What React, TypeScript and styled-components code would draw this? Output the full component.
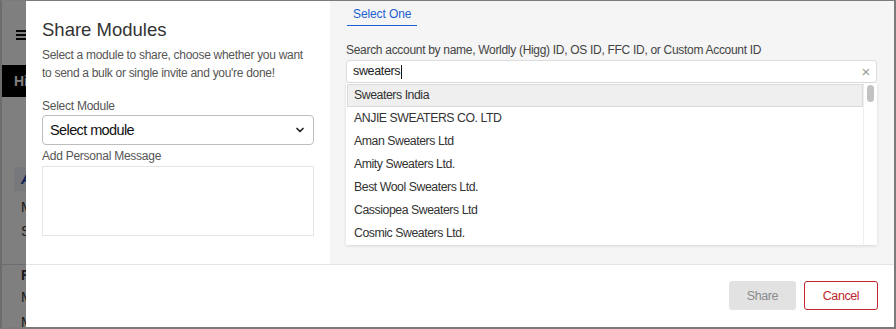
import React from 'react'
import styled, { createGlobalStyle } from 'styled-components'

const GlobalStyle = createGlobalStyle`
  html, body {
    margin: 0;
    padding: 0;
    background: #6f6f6f;
  }
  * { box-sizing: border-box; }
`

const Frame = styled.div`
  position: relative;
  width: 896px;
  height: 329px;
  overflow: hidden;
  border-top: 1px solid #7b7b7b;
  border-left: 2px solid #6c6c6c;
  border-right: 2px solid #7b7b7b;
  border-bottom: 2px solid #7b7b7b;
  background: #fff;
  font-family: "Liberation Sans", Arial, sans-serif;
`

const UnderPage = styled.div`
  display: flex;
  flex-direction: column;
  width: 100%;
  color: #222;
`

const Burger = styled.div`
  margin: 29px 0 0 14px;
  width: 12px;
  height: 10px;
  border-top: 2px solid #111;
  border-bottom: 2px solid #111;
  position: relative;
  &::after {
    content: '';
    position: absolute;
    left: 0;
    right: 0;
    top: 2px;
    height: 2px;
    background: #111;
  }
`

const BlackBar = styled.div`
  margin-top: 25px;
  height: 32px;
  background: #000;
  color: #fff;
  font-weight: bold;
  font-size: 14px;
  padding: 8px 0 0 12px;
`

const SideItem = styled.div<{ $active?: boolean; $bold?: boolean; $h?: number; $gap?: number }>`
  margin-top: ${p => p.$gap ?? 0}px;
  height: ${p => p.$h ?? 24}px;
  line-height: ${p => p.$h ?? 24}px;
  font-size: 14px;
  color: ${p => (p.$active ? '#0b3fa8' : '#333')};
  font-weight: ${p => (p.$active || p.$bold ? 'bold' : 'normal')};
  font-style: ${p => (p.$active ? 'italic' : 'normal')};
  background: ${p => (p.$active ? '#eef0f6' : 'transparent')};
  margin-left: ${p => (p.$active ? '12px' : '0')};
  padding-left: ${p => (p.$active ? '7px' : '19px')};
`

const SideRule = styled.div`
  margin-top: 21px;
  border-top: 1px solid #ddd;
`

const Overlay = styled.div`
  position: absolute;
  inset: 0;
  background: rgba(0, 0, 0, 0.5);
  display: flex;
  padding-left: 24px;
`

const Modal = styled.div`
  flex: 1;
  background: #fff;
  display: flex;
  flex-direction: column;
`

const Body = styled.div`
  display: flex;
  height: 264px;
  border-bottom: 1px solid #e6e6e6;
`

const LeftCol = styled.div`
  width: 304px;
  padding: 17px 16px 0 16px;
  display: flex;
  flex-direction: column;
`

const Title = styled.h2`
  margin: 0;
  font-size: 18.5px;
  font-weight: normal;
  color: #333;
  line-height: 24px;
`

const Description = styled.p`
  margin: 4px 0 0;
  font-size: 12px;
  line-height: 18px;
  letter-spacing: -0.3px;
  color: #555;
`

const FieldLabel = styled.label<{ $gap: number }>`
  display: block;
  margin-top: ${p => p.$gap}px;
  font-size: 12px;
  line-height: 16px;
  letter-spacing: -0.25px;
  color: #555;
`

const SelectBox = styled.div`
  margin-top: 1px;
  height: 30px;
  border: 1px solid #bdbdbd;
  border-radius: 4px;
  display: flex;
  align-items: center;
  justify-content: space-between;
  padding: 0 7px 0 7px;
  font-size: 14.5px;
  letter-spacing: -0.6px;
  color: #111;
`

const MessageBox = styled.div`
  margin-top: 2px;
  height: 70px;
  border: 1px solid #e6e6e6;
`

const RightCol = styled.div`
  flex: 1;
  background: #f5f5f5;
  padding: 0 16px 0 16px;
  display: flex;
  flex-direction: column;
`

const Tabs = styled.div`
  display: flex;
  padding-left: 1px;
`

const Tab = styled.div`
  padding: 6px 6px 4px 6px;
  font-size: 12px;
  line-height: 14px;
  letter-spacing: -0.1px;
  color: #1d5fd1;
  border-bottom: 1px solid #1d5fd1;
`

const SearchLabel = styled.div`
  margin-top: 17px;
  font-size: 12px;
  line-height: 14px;
  letter-spacing: -0.3px;
  color: #444;
`

const Combo = styled.div`
  margin-top: 3px;
  width: 531px;
`

const SearchInput = styled.div`
  height: 23px;
  background: #fff;
  border: 1px solid #ddd;
  border-radius: 3px;
  display: flex;
  align-items: center;
  justify-content: space-between;
  padding: 0 6px 0 6px;
  font-size: 12.5px;
  letter-spacing: -0.35px;
  color: #222;
`

const Caret = styled.span`
  display: inline-block;
  width: 1px;
  height: 14px;
  background: #111;
  vertical-align: middle;
  margin-left: 1px;
`

const Clear = styled.span`
  color: #999;
  font-size: 15px;
  line-height: 1;
`

const Dropdown = styled.div`
  display: flex;
  background: #fff;
  height: 162px;
  box-shadow: 0 1px 3px rgba(0, 0, 0, 0.12);
  overflow: hidden;
`

const List = styled.ul`
  flex: 1;
  margin: 0;
  padding: 1px 0 0 1px;
  list-style: none;
`

const Option = styled.li<{ $hl?: boolean }>`
  height: 23px;
  line-height: 21px;
  padding-left: 6px;
  font-size: 12.3px;
  letter-spacing: -0.45px;
  color: #333;
  background: ${p => (p.$hl ? '#efefef' : '#fff')};
  border: 1px solid ${p => (p.$hl ? '#dadada' : 'transparent')};
`

const ScrollTrack = styled.div`
  width: 14px;
  border-left: 1px solid #eee;
  padding: 2px 3px;
`

const ScrollThumb = styled.div`
  height: 17px;
  border-radius: 4px;
  background: #c2c2c2;
`

const Footer = styled.div`
  flex: 1;
  display: flex;
  justify-content: flex-end;
  align-items: flex-start;
  gap: 8px;
  padding: 16px 16px 0 0;
`

const Button = styled.button<{ $variant: 'disabled' | 'danger' }>`
  height: 29px;
  border-radius: 3px;
  font-family: inherit;
  font-size: 12.5px;
  letter-spacing: -0.4px;
  padding: 0;
  width: ${p => (p.$variant === 'disabled' ? '67px' : '74px')};
  background: ${p => (p.$variant === 'disabled' ? '#e2e2e2' : '#fff')};
  color: ${p => (p.$variant === 'disabled' ? '#8a8a8a' : '#c0262c')};
  border: 1px solid ${p => (p.$variant === 'disabled' ? '#e2e2e2' : '#c0262c')};
`

const Chevron = () => (
  <svg width="12" height="12" viewBox="0 0 12 12" fill="none">
    <path d="M3 4.5 L6 7.5 L9 4.5" stroke="#222" strokeWidth="1.7" strokeLinecap="round" strokeLinejoin="round" />
  </svg>
)

const results = [
  'Sweaters India',
  'ANJIE SWEATERS CO. LTD',
  'Aman Sweaters Ltd',
  'Amity Sweaters Ltd.',
  'Best Wool Sweaters Ltd.',
  'Cassiopea Sweaters Ltd',
  'Cosmic Sweaters Ltd.',
]

export default function App() {
  return (
    <>
      <GlobalStyle />
      <Frame>
        <UnderPage>
          <Burger />
          <BlackBar>Hi</BlackBar>
          <SideItem $active $gap={70}>A</SideItem>
          <SideItem $gap={4}>M</SideItem>
          <SideItem>S</SideItem>
          <SideRule />
          <SideItem $bold $h={20}>R</SideItem>
          <SideItem $h={25}>M</SideItem>
          <SideItem $h={25}>M</SideItem>
        </UnderPage>
        <Overlay>
          <Modal>
            <Body>
              <LeftCol>
                <Title>Share Modules</Title>
                <Description>
                  Select a module to share, choose whether you want to send a bulk or single invite and you're done!
                </Description>
                <FieldLabel $gap={16}>Select Module</FieldLabel>
                <SelectBox>
                  <span>Select module</span>
                  <Chevron />
                </SelectBox>
                <FieldLabel $gap={3}>Add Personal Message</FieldLabel>
                <MessageBox />
              </LeftCol>
              <RightCol>
                <Tabs>
                  <Tab>Select One</Tab>
                </Tabs>
                <SearchLabel>
                  Search account by name, Worldly (Higg) ID, OS ID, FFC ID, or Custom Account ID
                </SearchLabel>
                <Combo>
                  <SearchInput>
                    <span>
                      sweaters
                      <Caret />
                    </span>
                    <Clear>×</Clear>
                  </SearchInput>
                  <Dropdown>
                    <List>
                      {results.map((r, i) => (
                        <Option key={r} $hl={i === 0}>
                          {r}
                        </Option>
                      ))}
                    </List>
                    <ScrollTrack>
                      <ScrollThumb />
                    </ScrollTrack>
                  </Dropdown>
                </Combo>
              </RightCol>
            </Body>
            <Footer>
              <Button $variant="disabled">Share</Button>
              <Button $variant="danger">Cancel</Button>
            </Footer>
          </Modal>
        </Overlay>
      </Frame>
    </>
  )
}
